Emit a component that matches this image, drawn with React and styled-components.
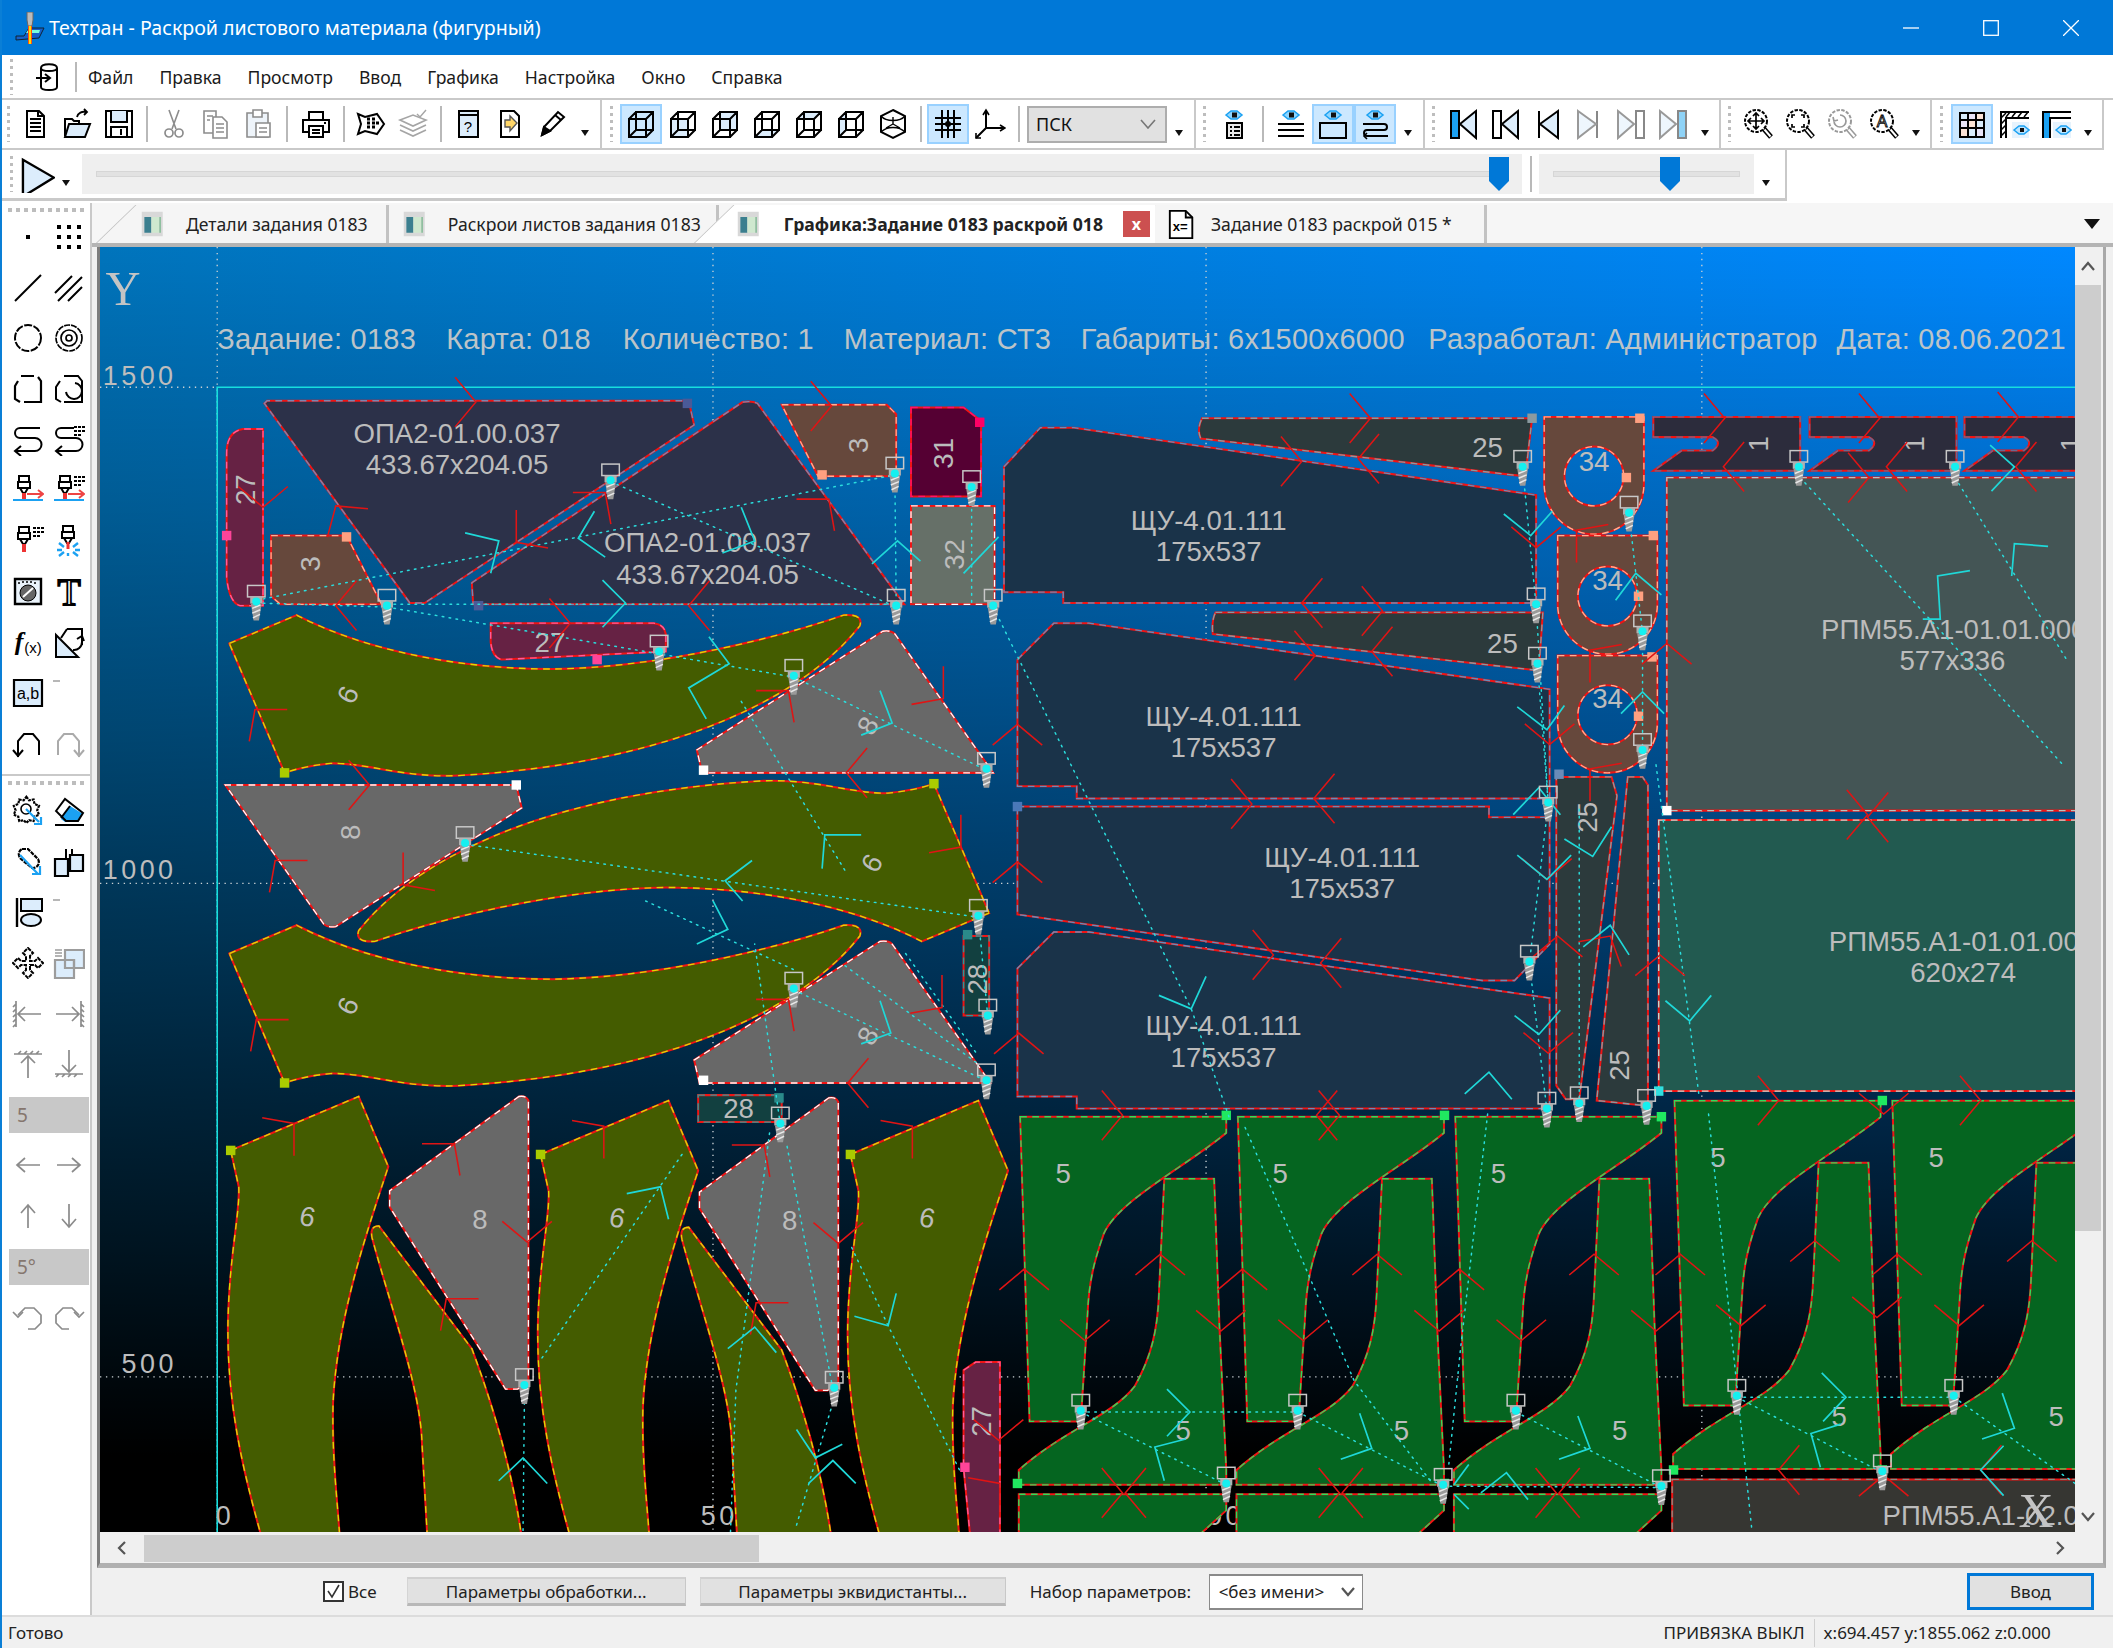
import React from 'react';
import styled, { createGlobalStyle } from 'styled-components';

const FONT = '"Noto Sans", "Open Sans", sans-serif';
const Global = createGlobalStyle`
  html, body { margin: 0; padding: 0; background: #fff; }
  * { box-sizing: border-box; }
`;

const Shell = styled.div`
  width: 2113px; height: 1648px; overflow: hidden; display: flex; flex-direction: column;
  background: #fff; font-family: ${FONT}; color: #111; border-left: 2px solid #0a7fd6;
`;
const TitleBar = styled.div`
  height: 55px; flex: none; background: #0078d7; color: #fff; display: flex; align-items: center;
  padding: 0 2px 0 12px; font-size: 19.6px; margin-left: -2px; padding-left: 14px;
`;
const TitleText = styled.span` margin-left: 3px; flex: 1; `;
const WinBtn = styled.div` width: 80px; height: 55px; display: flex; align-items: center; justify-content: center; `;
const MenuBar = styled.div`
  height: 45px; flex: none; display: flex; align-items: center; border-bottom: 2px solid #c9c9c9; padding-left: 6px; gap: 0;
`;
const MenuIconWrap = styled.div`
  width: 53px; height: 30px; display: flex; align-items: center; justify-content: center; margin-left: 10px; margin-right: 11px;
  border-right: 2px solid #b9b9b9;
`;
const MenuItem = styled.span` font-size: 17.6px; margin-right: 26px; color: #1b1b1b; `;
const ToolRow = styled.div` height: 50px; flex: none; display: flex; `;
const Group = styled.div`
  display: flex; align-items: center; height: 100%; padding-right: 3px;
  border-right: 2px solid #c9c9c9; border-bottom: 2px solid #c9c9c9;
`;
const Grip = styled.div`
  width: ${p => p.$w || 18}px; height: 36px; flex: none; display: flex; justify-content: center;
  &::before { content: ''; width: 3px; height: 100%; background: repeating-linear-gradient(to bottom, #bdbdbd 0 3px, transparent 3px 7px); }
`;
const ToolBtn = styled.div`
  width: 42px; height: 40px; flex: none; display: flex; align-items: center; justify-content: center;
  background: ${p => (p.$active ? '#cce8ff' : 'transparent')};
  box-shadow: ${p => (p.$active ? 'inset 0 0 0 2px #99d1ff' : 'none')};
`;
const Sep = styled.div`
  width: ${p => p.$w || 13}px; height: 36px; flex: none; display: flex; justify-content: center;
  &::before { content: ''; width: 2px; height: 100%; background: #b9b9b9; }
`;
const Drop = styled.div`
  width: ${p => p.$w || 24}px; height: 40px; flex: none; display: flex; align-items: flex-end; justify-content: center; padding-bottom: 8px;
  &::before { content: ''; border: 4.5px solid transparent; border-top: 6px solid #111; border-bottom: 0; }
`;
const Combo = styled.div`
  width: 140px; height: 37px; flex: none; background: #e1e1e1; border: 2px solid #adadad; display: flex; align-items: center;
  justify-content: space-between; padding: 0 9px 0 7px; font-size: 18px;
`;
const SecondRow = styled.div` height: 53px; flex: none; display: flex; `;
const PlayGroup = styled.div`
  width: 1785px; height: 51px; display: flex; align-items: center; border-right: 2px solid #c9c9c9; border-bottom: 3px solid #c9c9c9; padding-left: 6px;
`;
const SliderBox = styled.div`
  position: relative; height: 40px; width: ${p => p.$w}px; flex: none; background: #efefef; display: flex; align-items: center; padding: 0 ${p => p.$pad}px;
`;
const Track = styled.div` flex: 1; height: 6px; background: #e2e2e2; border: 1px solid #d6d6d6; `;
const Thumb = styled.svg` position: absolute; top: 3px; `;
const Main = styled.div` flex: 1; min-height: 0; display: flex; `;
const Dock = styled.div`
  width: 90px; flex: none; background: #fff; border-right: 2px solid #c9c9c9; margin-right: 0; display: flex; flex-direction: column;
`;
const DockSection = styled.div`
  height: ${p => p.$h}px; flex: none; border-bottom: ${p => (p.$end ? 0 : '2px solid #c9c9c9')}; padding: 5px 0 0 5px;
  &::before { content: ''; display: block; height: 4px; margin: 0 3px 0 1px; background: repeating-linear-gradient(to right, #bdbdbd 0 4px, transparent 4px 8px); }
`;
const DockGrid = styled.div`
  display: grid; grid-template-columns: 41px 41px; grid-auto-rows: 50.6px; margin-top: ${p => p.$top}px;
`;
const DockCell = styled.div` display: flex; align-items: center; justify-content: center; `;
const DockInput = styled.div`
  grid-column: 1 / 3; height: 36px; margin: 0 0 0 2px; align-self: center; background: #c8c8c8; color: #85766e; font-size: 19px; padding-left: 8px; line-height: 36px; width: 80px;
`;
const Work = styled.div` flex: 1; min-width: 0; display: flex; flex-direction: column; background: #f0f0f0; `;
const TabStrip = styled.div`
  height: 44px; flex: none; background: #f6f6f6; border-bottom: 4px solid #b4b4b4; display: flex; align-items: flex-end; position: relative; padding-left: 4px;
`;
const Tab = styled.div`
  position: relative; height: 38px; display: flex; align-items: center; margin-left: ${p => p.$ml || 0}px;
  padding: 0 ${p => p.$pr}px 0 ${p => p.$pl}px; z-index: ${p => p.$z}; font-size: 17.6px; font-weight: ${p => (p.$active ? 700 : 400)};
  background: linear-gradient(to right, transparent 40px, ${p => (p.$active ? '#fff' : '#f5f5f5')} 40px);
  border-right: ${p => (p.$active ? '0' : '3px solid #c2c2c2')}; color: #222; white-space: nowrap;
  &::before {
    content: ''; position: absolute; left: 0; top: 0; bottom: 0; width: 42px; background: ${p => (p.$active ? '#fff' : '#f5f5f5')};
    border-left: 1px solid #bdbdbd; transform: skewX(-46deg); transform-origin: bottom left; z-index: -1;
  }
`;
const TabIcon = styled.span` display: flex; margin-right: ${p => p.$mr}px; `;
const CloseTab = styled.span`
  width: 27px; height: 26px; flex: none; background: #cc5050; color: #fff; font-size: 16px; font-weight: 700; display: flex; align-items: center; justify-content: center; margin-left: 20px; line-height: 1;
`;
const TabsMenu = styled.div`
  position: absolute; right: 13px; top: 16px; width: 0; height: 0; border: 8px solid transparent; border-top: 10px solid #111; border-bottom: 0;
`;
const Frame = styled.div`
  flex: 1; min-height: 0; display: flex; flex-direction: column; margin-left: 5px; margin-right: 7px; border-left: 3px solid #7d7d7d; border-right: 3px solid #a8a8a8; border-bottom: 5px solid #b0b0b0;
  background: #f0f0f0; width: 2009px;
`;
const FrameTop = styled.div` flex: 1; min-height: 0; display: flex; `;
const CanvasBox = styled.div`
  width: 1975px; flex: none; height: 100%; overflow: hidden;
  background: linear-gradient(to bottom, rgba(0,0,0,0) 0%, rgba(0,0,0,1) 94%), linear-gradient(to right, #0074bc, #0088ff);
`;
const Sheet = styled.svg` display: block; width: 100%; height: 100%; `;
const VScroll = styled.div` width: 26px; flex: none; background: #f0f0f0; display: flex; flex-direction: column; `;
const ScrollEnd = styled.div` height: ${p => p.$h}px; flex: none; display: flex; align-items: center; justify-content: center; `;
const VThumb = styled.div` height: 946px; flex: none; background: #cdcdcd; `;
const HScroll = styled.div` height: 31px; flex: none; display: flex; align-items: center; background: #f0f0f0; padding-top: 1px; width: 1975px; `;
const HThumb = styled.div` width: 615px; height: 27px; background: #cdcdcd; margin-left: 0; `;
const ArrowCell = styled.div` width: ${p => p.$w}px; flex: none; display: flex; justify-content: center; `;
const Spring = styled.div` flex: 1; `;
const BottomPanel = styled.div`
  height: 47px; flex: none; background: #f0f0f0; display: flex; align-items: center; font-size: 17px; padding-left: 231px; color: #222;
`;
const Check = styled.div`
  width: 21px; height: 21px; border: 2px solid #333; background: #fff; display: flex; align-items: center; justify-content: center; margin-right: 4px;
`;
const PanelBtn = styled.div`
  width: ${p => p.$w}px; height: 29px; background: #e1e1e1; border-top: 2px solid #d0d0d0; border-bottom: 3px solid #b8b8b8; border-left: 1px solid #d4d4d4; border-right: 1px solid #c8c8c8; display: flex; align-items: center; justify-content: center; margin-left: ${p => p.$ml}px;
`;
const PanelLabel = styled.span` margin-left: 24px; width: 179px; white-space: nowrap; `;
const PanelSelect = styled.div`
  width: 154px; height: 36px; background: #fff; border: 2px solid #8a8a8a; border-left-width: 1px; border-right-width: 1px; display: flex; align-items: center; justify-content: space-between; padding: 0 6px 0 9px;
`;
const EnterBtn = styled.div`
  width: 127px; height: 37px; margin-left: auto; margin-right: 19px; background: #e1e1e1; border: 3px solid #0078d7; display: flex; align-items: center; justify-content: center;
`;
const StatusBar = styled.div`
  height: 33px; flex: none; background: #f0f0f0; border-top: 2px solid #dcdcdc; display: flex; align-items: center; font-size: 17px; padding-left: 6px; color: #222;
`;
const StatusCell = styled.span` margin-left: ${p => p.$ml || 0}px; white-space: nowrap; `;
const StatusDiv = styled.span` width: 1px; height: 28px; background: #d0d0d0; margin: 0 9px; `;
const InfoText = styled.text` font: 21.5px "Liberation Sans", Arial, sans-serif; fill: #bcc4c8; letter-spacing: .2px; `;
const AxisText = styled.text` font: 20px "Liberation Sans", Arial, sans-serif; fill: #bdbdbd; letter-spacing: 2.6px; `;
const BigAxis = styled.text` font: 36px "Liberation Serif", serif; fill: #c4c4c4; `;
const PartText = styled.text` font: 20.5px "Liberation Sans", Arial, sans-serif; fill: #bcbcbc; text-anchor: middle; dominant-baseline: central; `;
const IconText = styled.text` font-family: "Liberation Sans", Arial, sans-serif; text-anchor: middle; `;

/* ---------- icons ---------- */
const LB = '#dcedfc';
const SKY = '#1ba1f2';
const P = ({ d, c = '#000', f = 'none', w = 2, ...r }) => <path d={d} stroke={c} fill={f} strokeWidth={w} {...r} />;
const Eye = () => (<g><P d="M8 7l5-4h6l5 4-5 4h-6z" c={SKY} f="#8fd6ff" w={1.5} /><rect x="14" y="4.5" width="5" height="5" fill="#111" /></g>);
const CUBE = face => (<g>
  {face && <path d={face} fill={LB} />}
  <P d="M4 11h17v18H4zM11 4h17v18H11zM4 11l7-7M21 11l7-7M21 29l7-7M4 29l7-7" />
</g>);
const Glass = ({ children, c = '#000' }) => (<g>
  <circle cx="14" cy="13" r="11" fill="#fff" stroke={c} strokeWidth="2" strokeDasharray="3.4 1.4" />
  <P d="M22 21l7 8" c={c} w={5} /><P d="M22.5 21.5l6 7" c="#fff" w={2} />{children}
</g>);
const NavTri = ({ d, c = '#000', f = LB }) => <P d={d} c={c} f={f} />;
const G = '#8c8c8c';
const TORCH = (blue = true) => (<g>
  <P d="M7 2h10v6H7zM6 8h12v6H6zM8 14h8l-3 5h-2z" f="#fff" />
  <P d="M12 19v8" c="#ee3333" w={4} />
  {blue && <P d="M1 26h30" c={SKY} w={2} />}
</g>);
const DOTS = <P d="M21 3h3M25 3h3M29 3h3M21 7h3M25 7h3M29 7h3M21 11h3M25 11h3" w={1.8} />;

const ICONS = {
  base: <g><P d="M7 7c0-5 16-5 16 0v19c0 4-16 4-16 0z" /><P d="M7 7c0 4 16 4 16 0" /><P d="M2 17h13M11 13l5 4-5 4" f="#fff" /></g>,
  doc: <g><P d="M8 3h12l5 5v21H8z" f="#fff" /><P d="M11 11h11M11 15h11M11 19h11M11 23h11M19 3v5h6" /></g>,
  open: <g><P d="M4 28V11h7l2 2h5v3" /><P d="M4 29l4-13h21l-5 13z" f={LB} /><P d="M16 9c1-4 5-6 9-5M23 1l3 3-3 3" w={1.8} /></g>,
  save: <g><P d="M3 3h26v26H3z" f="#fff" /><path d="M8 3h16v11H8z" fill={LB} /><P d="M8 3v11h16V3M8 29V19h16v10M18 21v6" /></g>,
  cut: <g><P d="M11 2l7 19M21 2l-7 19" c={G} w={1.6} /><circle cx="11" cy="25" r="4" fill="none" stroke={G} strokeWidth="1.7" /><circle cx="21" cy="25" r="4" fill="none" stroke={G} strokeWidth="1.7" /></g>,
  copy: <g><P d="M4 3h12v22H4z" c={G} f="#fff" w={1.6} /><P d="M13 9h9l5 5v16H13z" c={G} f="#fff" w={1.6} /><P d="M16 16h8M16 20h8M16 24h8M7 8h6M7 12h3" c={G} w={1.6} /></g>,
  paste: <g><P d="M5 5h21v24H5z" c={G} f="#eef4fa" w={1.6} /><P d="M11 2h9v7h-9z" c={G} f="#fff" w={1.6} /><P d="M14 15h14v14H14z" c={G} f="#fff" w={1.6} /><P d="M17 20h8M17 24h8" c={G} w={1.6} /></g>,
  print: <g><P d="M9 4h14v8H9z" f="#fff" /><P d="M9 24H3V12h26v12h-6" f="#fff" /><P d="M9 18h14v11H9zM12 22h8M12 25h8" f="#fff" /><P d="M24 15h2" /></g>,
  nest: <g><P d="M3 6l7 3 12-3 7 10-7 10-12-3-7 3 3-10z" f="#fff" /><P d="M12 11h3M17 11h3M12 15h3M17 15h3M21 15h3M12 19h3M17 19h3" w={3} /></g>,
  layers: <g><P d="M3 12l13-5 13 5-13 6zM3 17l13 6 13-6M3 22l13 6 13-6" c="#a5a5a5" w={1.6} /><P d="M20 6l3 3 6-7" c="#a5a5a5" w={1.4} /></g>,
  help: <g><P d="M7 3h19v26H7z" f={LB} /><P d="M7 7h19" /><IconText x="16" y="24" fontSize="15" fill="#000">?</IconText></g>,
  docArrow: <g><P d="M7 3h13l5 5v21H7z" f="#fff" /><P d="M11 12h5V8l7 7-7 8v-4h-5z" c="#555" f="#ffd668" w={1.4} /></g>,
  pencil: <g><P d="M6 27l2-8L22 4l6 5-14 14z" f="#fff" /><P d="M6 27l8-4-6-4z" f="#000" /><P d="M19 7l6 5" /></g>,
  c0: CUBE(), c1: CUBE('M4 11h17v18H4z'), c2: CUBE('M11 4h17v18H11z'), c3: CUBE('M4 29l7-7h17l-7 7z'), c4: CUBE('M4 11l7-7h17l-7 7z'), c5: CUBE('M4 11l7-7v18l-7 7z'), c6: CUBE('M21 11l7-7v18l-7 7z'),
  iso: <g><P d="M16 2l12 6v16l-12 6-12-6V8z" /><P d="M16 16V9M16 16l-7 4M16 16l7 4M4 8c5 6 19 6 24 0M4 24c6-6 18-6 24 0" w={1.4} /></g>,
  grid: <g><P d="M10 2v28M16 2v28M22 2v28M3 10h26M3 16h26M3 22h26" /><circle cx="16" cy="16" r="3" fill="#000" /></g>,
  axes: <g><P d="M12 20V3M12 20h18M12 20L2 30" /><P d="M9 7l3-5 3 5M26 17l5 3-5 3M2 25v5h5" w={1.6} /></g>,
  eyeDoc: <g><Eye /><P d="M9 15h15v15H9z" f="#e9e9e9" /><P d="M12 19h2M16 19h6M12 23h2M16 23h6M12 27h2M16 27h6" /></g>,
  eyeLines: <g><Eye /><P d="M3 16h26M3 22h26M3 28h26" /></g>,
  eyeRect: <g><Eye /><P d="M3 15h26v15H3z" /></g>,
  eyeLoop: <g><Eye /><P d="M4 16h21a3 3 0 010 6H8a3 3 0 000 6h21" /><P d="M8 25l-3 3 3 3" w={1.6} /></g>,
  n1: <g><P d="M4 3h8v27H4z" f={SKY} /><NavTri d="M29 3L13 16l16 14z" /></g>,
  n2: <g><P d="M4 3h8v27H4z" f="#fff" /><NavTri d="M29 3L13 16l16 14z" /></g>,
  n3: <g><P d="M8 3v27" /><NavTri d="M27 3L9 16l18 14z" /></g>,
  n4: <g><P d="M24 3v27" c="#888" /><NavTri d="M5 3l18 13L5 30z" c="#999" f="#eef6fd" /></g>,
  n5: <g><P d="M21 3h8v27h-8z" c="#888" f="#fff" /><NavTri d="M3 3l16 13L3 30z" c="#999" f="#eef6fd" /></g>,
  n6: <g><P d="M21 3h8v27h-8z" c="#888" f="#8fd3f7" /><NavTri d="M3 3l16 13L3 30z" c="#999" f="#eef6fd" /></g>,
  z1: <Glass><P d="M14 5v16M6 13h16M11 8l3-3 3 3M11 18l3 3 3-3M9 10l-3 3 3 3M19 10l3 3-3 3" w={1.7} /></Glass>,
  z2: <Glass><P d="M8 10V7h3M17 7h3v3M20 16v3h-3M11 19H8v-3" w={1.7} /></Glass>,
  z3: <Glass c="#999"><P d="M8 13a6 6 0 106-6M7 9l1 4 4-1" c="#999" w={1.7} /></Glass>,
  z4: <Glass><IconText x="14" y="19" fontSize="16" fill="none" stroke="#000" strokeWidth=".9">A</IconText></Glass>,
  table: <g><path d="M4 5h8v7H4z" fill="#d9ecfb" /><path d="M12 5h8v7h-8z" fill="#e8e3f6" /><path d="M20 5h8v7h-8z" fill="#fbe3d6" /><path d="M4 12h8v8H4z" fill="#e8e3f6" /><path d="M12 12h8v8h-8z" fill="#fbe3d6" /><path d="M20 12h8v8h-8z" fill="#d9ecfb" /><path d="M4 20h8v8H4z" fill="#fbe3d6" /><path d="M12 20h8v8h-8z" fill="#d9ecfb" /><path d="M20 20h8v8h-8z" fill="#e8e3f6" /><P d="M4 5h24v24H4zM12 5v24M20 5v24M4 12h24M4 20h24" /></g>,
  corner1: <g><P d="M3 30V4h28M8 30V10h23" /><P d="M3 10l5-5M3 16l5-5M3 22l5-5M3 28l5-5M12 4l-4 5M18 4l-4 5M24 4l-4 5M30 4l-4 5" w={1.5} /><path d="M14 14h17v16H14z" fill="#e6f3fd" /><P d="M16 22l5-4h5l5 4-5 4h-5z" c={SKY} f="#bde6ff" w={1.5} /><rect x="22" y="20" width="4" height="4" fill="#111" /></g>,
  corner2: <g><path d="M3 4h7v26H3z" fill={SKY} /><P d="M3 30V4h28M10 30V10h21" /><path d="M13 14h18v16H13z" fill="#e6f3fd" /><P d="M16 22l5-4h5l5 4-5 4h-5z" c={SKY} f="#bde6ff" w={1.5} /><rect x="22" y="20" width="4" height="4" fill="#111" /></g>,
  play: <P d="M5 4l26 15L5 35z" f={LB} />,
  point: <rect x="14" y="14" width="4" height="4" fill="#000" />,
  points: <g>{[6, 16, 26].flatMap(y => [6, 16, 26].map(x => <rect key={x + '-' + y} x={x - 2} y={y - 2} width="4" height="4" fill="#000" />))}</g>,
  line: <P d="M3 29L29 3" />,
  lines: <P d="M2 21L19 4M5 29L29 5M15 29L29 15" />,
  circle: <circle cx="16" cy="16" r="13" fill="none" stroke="#000" strokeWidth="2" strokeDasharray="8 1.5" />,
  rings: <g><circle cx="16" cy="16" r="13" fill="none" stroke="#000" strokeWidth="1.7" strokeDasharray="6 1" /><circle cx="16" cy="16" r="8" fill="none" stroke="#000" strokeWidth="1.7" /><circle cx="16" cy="16" r="3" fill="none" stroke="#000" strokeWidth="1.7" /></g>,
  round: <P d="M9 3h13M26 4l3 4v21H12M8 29l-5-3V13l3-5" w={2.2} />,
  rectc: <g><P d="M11 3h14l4 5v21H11M8 29l-5-3V14l4-6" /><P d="M13 19a8 8 0 109-9" /></g>,
  snake: <g><P d="M28 4H8a5 5 0 000 10h15a6 6 0 010 13H4" /><P d="M9 22l-6 5 6 5" /></g>,
  snakeD: <g><P d="M21 4H8a5 5 0 000 10h15a6 6 0 010 13H4" /><P d="M9 22l-6 5 6 5" />{DOTS}</g>,
  torchL: <g>{TORCH()}<P d="M15 20h15M26 16l5 4-5 4" c="#ee4444" /></g>,
  torchD: <g>{TORCH()}<P d="M15 20h15M26 16l5 4-5 4" c="#ee4444" />{DOTS}</g>,
  torchS: <g>{TORCH(false)}{DOTS}</g>,
  burst: <g><P d="M10 1h10v6H10zM9 7h12v6H9zM11 13h8l-3 5h-2z" f="#fff" /><P d="M15 17v7" c="#ee3333" w={3} /><P d="M6 18l5 4M25 18l-5 4M6 31l5-4M25 31l-5-4M4 25h5M22 25h5M15 28v3" c={SKY} w={2.4} /></g>,
  gauge: <g><P d="M3 4h26v25H3z" f="#eaf3fb" w={2.4} /><P d="M6 8h2M10 7h2M14 7h2M18 7h2M22 8h2" w={1.4} /><circle cx="16" cy="18" r="8" fill="#666" stroke="#000" /><P d="M11 22l10-9" c="#fff" w={2} /></g>,
  T: <IconText x="16" y="30" fontSize="38" fontFamily="Liberation Serif" fill="#fff" stroke="#000" strokeWidth="1.8" style={{ fontFamily: '"Liberation Serif", serif' }}>T</IconText>,
  fx: <g><IconText x="7" y="24" fontSize="26" fontWeight="700" fill="#000" style={{ fontFamily: '"Liberation Serif", serif', fontStyle: 'italic' }}>f</IconText><IconText x="21" y="27" fontSize="15" fill="#000">(x)</IconText></g>,
  tri: <g><P d="M3 9v22h22z" f={LB} /><P d="M14 3h15v16" /><P d="M14 3L8 12M29 16a8 8 0 01-9 8" /><P d="M24 13l5-3 2 5" /></g>,
  ab: <g><P d="M2 3h28v26H2z" f={LB} w={2.2} /><IconText x="16" y="22" fontSize="16" fill="#000">a,b</IconText></g>,
  dash: <P d="M0 4h7" c="#888" w={1.2} />,
  undo: <g><P d="M6 30V14l6-7h9l6 7v14" /><P d="M1 23l5 6 5-6" /></g>,
  redo: <g><P d="M5 28V14l6-7h9l6 7v16" c="#aaa" /><P d="M21 23l5 6 5-6" c="#aaa" /></g>,
  gear: <g><P d="M16 2l3 4 5-1 1 5 5 2-2 5 2 5-5 2-1 5-5-1-3 3-3-3-5 1-1-5-5-2 2-5-2-5 5-2 1-5 5 1z" f="#fff" w={2.4} strokeDasharray="3 1" transform="scale(.9)" /><circle cx="14" cy="14" r="5" fill="#fff" stroke="#000" strokeWidth="1.6" /><P d="M14 14l13 13M22 29h7v-7" c={SKY} w={2.2} /></g>,
  eraser: <g><path d="M17 11l13 8-5 8H12l-4-3z" fill={SKY} /><P d="M3 16L12 4l18 14-5 8H13zM17 11l-9 12M2 30h29" /></g>,
  link: <g><P d="M10 3h6l10 10a6 6 0 01-6 9L9 13a6 6 0 011-10z" f="#fff" w={2.2} strokeDasharray="4 1" /><P d="M8 9l18 19M20 28h8v-8" c={SKY} w={2.2} /></g>,
  dist: <g><P d="M2 13h13v17H2zM17 9h13v16H17z" f={LB} w={2.2} /><P d="M13 3v11M19 3v7" /></g>,
  align: <g><P d="M5 2v29" w={2.4} /><P d="M9 3h21v12H9z" f={LB} /><ellipse cx="19" cy="24" rx="10" ry="6" fill={LB} stroke="#000" strokeWidth="2" /></g>,
  move: <P d="M16 1l5 5-3 3v5h5l3-3 5 5-5 5-3-3h-5v5l3 3-5 5-5-5 3-3v-5H9l-3 3-5-5 5-5 3 3h5V9l-3-3z" f="#fff" w={2} strokeDasharray="4 1" />,
  overlay: <g><P d="M12 3h19v18H12z" c="#9c9c9c" f={LB} w={2.2} /><P d="M2 13h19v18H2z" c="#9c9c9c" f={LB} w={2.2} /><P d="M12 13h9v8h-9z" c="#9c9c9c" w={2.2} /><P d="M2 3h7M2 6h7M2 9h7" c="#9c9c9c" w={1.3} /></g>,
  alL: <g><P d="M4 3v26M4 6l-3 3M4 11l-3 3M4 16l-3 3M4 21l-3 3M4 26l-3 3M29 16H6M13 9l-7 7 7 7" c="#8b8b8b" w={1.7} /></g>,
  alR: <g><P d="M28 3v26M28 6l3 3M28 11l3 3M28 16l3 3M28 21l3 3M28 26l3 3M3 16h23M19 9l7 7-7 7" c="#8b8b8b" w={1.7} /></g>,
  alT: <g><P d="M2 6h28M6 6l3-3M12 6l3-3M18 6l3-3M24 6l3-3M16 30V8M9 15l7-7 7 7" c="#8b8b8b" w={1.7} /></g>,
  alB: <g><P d="M2 26h28M6 26l-3 3M12 26l-3 3M18 26l-3 3M24 26l-3 3M16 2v22M9 17l7 7 7-7" c="#8b8b8b" w={1.7} /></g>,
  aL: <P d="M28 16H5M13 9l-8 7 8 7" c="#8b8b8b" w={1.7} />,
  aR: <P d="M4 16h23M19 9l8 7-8 7" c="#8b8b8b" w={1.7} />,
  aU: <P d="M16 28V5M9 13l7-8 7 8" c="#8b8b8b" w={1.7} />,
  aD: <P d="M16 4v23M9 19l7 8 7-8" c="#8b8b8b" w={1.7} />,
  rotL: <g><P d="M6 14l7-7h9l7 7v8l-6 6h-7" c="#8b8b8b" w={1.7} /><P d="M1 11l5 5 5-5" c="#8b8b8b" w={1.7} /></g>,
  rotR: <g><P d="M26 14l-7-7h-9l-7 7v8l6 6h7" c="#8b8b8b" w={1.7} /><P d="M21 11l5 5 5-5" c="#8b8b8b" w={1.7} /></g>,
  tabGrid: <g><path d="M2 2h24v28H2z" fill="#d8d8d8" /><path d="M5 8h8v18H5z" fill="#3b7f8f" /><path d="M13 8h9v18h-9z" fill="#cfe8cf" /><path d="M22 8h2v18h-2z" fill="#8fbf9f" /></g>,
  xls: <g><P d="M3 2h17l7 7v22H3z" f="#fff" /><P d="M20 2v7h7" /><IconText x="14" y="23" fontSize="14" fontWeight="700" fill="#000">x=</IconText></g>,
  logo: <g><P d="M13 0h6v8l-1 6h-4l-1-6z" c="#666" f="#bbb" w={1} /><path d="M2 24h8l5-8h15l-5 10-23 2z" fill="#1560c8" stroke="#123" /><path d="M12 21h13l1-3H14z" fill="#7fd" /><path d="M14 14h4v18h-4z" fill="#ff5010" /><path d="M15 14h2v18h-2z" fill="#ffdd00" /></g>,
};
const Ico = ({ n, s = 32, h }) => <svg width={s} height={h || s} viewBox={h ? `0 0 32 ${h * 32 / s}` : '0 0 32 32'}>{ICONS[n]}</svg>;

const ROW1 = [
  { w: 0, items: [['grip', 12], ['g', 'doc'], ['g', 'open'], ['g', 'save'], ['s', 13], ['g', 'cut'], ['g', 'copy'], ['g', 'paste'], ['s', 16], ['g', 'print'], ['s', 13], ['g', 'nest'], ['g', 'layers'], ['s', 13], ['g', 'help'], ['g', 'docArrow'], ['g', 'pencil'], ['d', 24]] },
  { items: [['grip', 18], ['a', 'c0'], ['g', 'c1'], ['g', 'c2'], ['g', 'c3'], ['g', 'c4'], ['g', 'c5'], ['g', 'iso'], ['s', 13], ['a', 'grid'], ['g', 'axes'], ['s', 16], ['combo'], ['d', 24]] },
  { items: [['grip', 17], ['g', 'eyeDoc'], ['s', 15], ['g', 'eyeLines'], ['a', 'eyeRect'], ['a', 'eyeLoop'], ['d', 24]] },
  { items: [['grip', 17], ['g', 'n1'], ['g', 'n2'], ['g', 'n3'], ['g', 'n4'], ['g', 'n5'], ['g', 'n6'], ['d', 22]] },
  { items: [['grip', 16], ['g', 'z1'], ['g', 'z2'], ['g', 'z3'], ['g', 'z4'], ['d', 22]] },
  { items: [['grip', 19], ['a', 'table'], ['g', 'corner1'], ['g', 'corner2'], ['d', 22]] },
];
const DOCK1 = ['point', 'points', 'line', 'lines', 'circle', 'rings', 'round', 'rectc', 'snake', 'snakeD', 'torchL', 'torchD', 'torchS', 'burst', 'gauge', 'T', 'fx', 'tri', 'ab', 'dash', 'undo', 'redo'];
const DOCK2A = ['gear', 'eraser', 'link', 'dist', 'align', 'dash', 'move', 'overlay', 'alL', 'alR', 'alT', 'alB'];
const DOCK2B = ['aL', 'aR', 'aU', 'aD'];

const renderTool = (t, i) => {
  const [k, v] = t;
  if (k === 'grip') return <Grip key={i} $w={v} />;
  if (k === 's') return <Sep key={i} $w={v} />;
  if (k === 'd') return <Drop key={i} $w={v} />;
  if (k === 'combo') return <Combo key={i}>ПСК<svg width="16" height="10" viewBox="0 0 16 10"><path d="M1 1l7 8 7-8" fill="none" stroke="#777" strokeWidth="1.6" /></svg></Combo>;
  return <ToolBtn key={i} $active={k === 'a'}><Ico n={v} /></ToolBtn>;
};

/* ---------- nesting sheet (display coordinates) ---------- */
const OLIVE = '#445c00', GREY = '#686868', WINE = '#662244', BROWN = '#66483c', NAVY = '#2c3149', SLATE = '#1a3349', GRN = '#056520', DK25 = '#2c3a3c';
const BLADE = 'M170,477 L220,456 C270,482 340,496 410,496 C490,495 580,472 626,456 Q641,455 638,464 C600,512 510,565 340,575 C300,577 270,565 245,566 Q225,568 211,573 Z';
const TRI = 'M655,468 Q661,467 664,470 L737,573 H521 L517,556 Z';
const VBLADE = 'M171,853 L266,813 L288,865 C275,905 250,975 247,1040 C246,1080 250,1110 252,1140 H194 C180,1090 168,1040 169,980 C170,930 178,900 177,880 Z';
const VTRI = 'M385,813 Q390,812 392,816 V1025 L384,1030 H375 L289,895 V883 Z';
const NARROW = 'M281,909 Q274,909 276,918 C290,970 312,1030 313,1070 L317,1140 H387 C380,1090 365,1040 350,1000 Z';
const FIVE_A = 'M757,828 H910 V840 C880,865 830,890 819,915 C812,935 808,950 807,975 L802,1054 H764 Z';
const FIVE_B = 'M864,874 H901 L905,985 L910,1090 V1101 H756 V1090 C790,1060 825,1050 842,1028 C855,1005 859,985 860,960 Z';
const FIVE_C = 'M756,1108 H910 V1120 L888,1140 H756 Z';
const ring = (cx, cy, top) => `M${cx - 37},${top} H${cx + 37} V${cy + 6} A37,37 0 0 1 ${cx - 37},${cy + 6} Z M${cx + 22},${cy} A22,22 0 1 0 ${cx - 22},${cy} A22,22 0 1 0 ${cx + 22},${cy} Z`;
const ONE = 'M1227,309 H1336 V349 H1227 L1248,334 H1271 Q1279,328 1271,324 H1227 Z';
const PARTS = [
  ['M196,299 L198,297 H511 L515,315 L315,447 H304 Z', NAVY, '#7a86b0'],
  ['M551,298 Q558,297 562,299 L671,448 H351 L350,432 Z', NAVY, '#7a86b0'],
  ['M195,318 H180 Q168,320 168,336 V428 Q170,447 178,449 H195 Z', WINE, '#ff5c9c'],
  ['M201,397 H257 L283,448 H208 L201,442 Z', BROWN, '#ffb090'],
  ['M580,300 H658 L665,307 V353 H607 Z', BROWN, '#ffb090'],
  ['M676,302 H715 L728,312 V368 H676 Z', '#550033', '#ff1070'],
  ['M676,375 H738 V448 H676 Z', '#667068', '#ffffff'],
  ['M364,462 H485 Q493,463 494,470 V483 L372,489 Q365,487 364,476 Z', WINE, '#ff5c9c'],
  ['M715,694 H734 V753 H715 Z', '#124040', '#2a9a9a'],
  ['M518,812 H580 V832 H518 Z', '#124040', '#2a9a9a'],
  ['M715,1016 L724,1010 H742 V1140 H720 L715,1088 Z', WINE, '#ff5c9c'],
  ['M745,346 L772,317 H797 L1140,367 V447 H789 V439 H745 Z', SLATE, '#6a8cb8'],
  ['M755,489 L782,462 H808 L1150,511 V592 H799 V583 H755 Z', SLATE, '#6a8cb8'],
  ['M755,598 H1105 V606 H1150 V700 L1124,727 H1100 L755,678 Z', SLATE, '#6a8cb8'],
  ['M755,718 L782,691 H808 L1150,740 V822 H799 V813 H755 Z', SLATE, '#6a8cb8'],
  ['M892,310 H1137 L1132,353 L1122,352 L891,325 Q888,318 892,310 Z', DK25, '#8a9aa0'],
  ['M902,454 H1145 L1142,497 L1132,496 L900,470 Q899,460 902,454 Z', DK25, '#8a9aa0'],
  ['M1155,576 H1196 L1200,590 L1172,815 L1162,815 L1155,805 Z', DK25, '#8a9aa0'],
  ['M1208,576 H1219 L1223,582 V820 L1185,816 Z', DK25, '#8a9aa0'],
  [ring(1183, 353, 309), BROWN, '#ffb090'],
  [ring(1193, 442, 397), BROWN, '#ffb090'],
  [ring(1193, 530, 486), BROWN, '#ffb090'],
  [ONE, '#2c2c3c', '#6a6a90'],
  [ONE, '#2c2c3c', '#6a6a90', 'translate(116,0)'],
  [ONE, '#2c2c3c', '#6a6a90', 'translate(231,0)'],
  ['M1237,354 H1545 V601 H1237 Z', '#445555', '#b8c4c0'],
  ['M1231,608 H1545 V809 H1231 Z', '#225a50', '#c0e0d8'],
  ['M1241,1097 H1545 V1140 H1241 Z', '#363632', '#8a8a80'],
  [BLADE, OLIVE, '#d8e000'],
  [BLADE, OLIVE, '#d8e000', 'translate(0,230)'],
  [BLADE, OLIVE, '#d8e000', 'translate(904,1154) rotate(180)'],
  [TRI, GREY, '#ffffff'],
  [TRI, GREY, '#ffffff', 'translate(-2,230)'],
  [TRI, GREY, '#ffffff', 'translate(904,1155) rotate(180)'],
  [VBLADE, OLIVE, '#d8e000'],
  [VBLADE, OLIVE, '#d8e000', 'translate(230,3)'],
  [VBLADE, OLIVE, '#d8e000', 'translate(460,3)'],
  [VTRI, GREY, '#ffffff'],
  [VTRI, GREY, '#ffffff', 'translate(230,1)'],
  [NARROW, OLIVE, '#d8e000'],
  [NARROW, OLIVE, '#d8e000', 'translate(230,1)'],
  ...[[0, 0], [161.6, 0], [323, 0], [485.7, -11.8], [647.4, -11.8]].flatMap(([x, y]) => [
    [FIVE_A, GRN, '#2ce05a', `translate(${x},${y})`],
    [FIVE_B, GRN, '#2ce05a', `translate(${x},${y})`],
  ]),
  [FIVE_C, GRN, '#2ce05a'],
  [FIVE_C, GRN, '#2ce05a', 'translate(161.6,0)'],
  [FIVE_C, GRN, '#2ce05a', 'translate(323,0)'],
];
const TORCHES = [[190, 447], [287, 450], [453, 357], [489, 484], [589, 502], [664, 352], [665, 450], [721, 362], [737, 450], [345, 626], [732, 571], [726, 680], [589, 734], [733, 754], [732, 802], [579, 834], [389, 1028], [619, 1030], [802, 1047], [963, 1047], [1125, 1047], [1289, 1036], [1450, 1036], [1397, 1092], [910, 1101], [1071, 1102], [1233, 1103], [1148, 823], [1172, 819], [1222, 821], [1130, 347], [1140, 449], [1141, 493], [1149, 596], [1135, 714], [1209, 381], [1219, 469], [1219, 557], [1335, 347], [1451, 347]];
const REDS = [[353, 298, 180], [617, 301, 180], [195, 376, 270], [249, 375, 55], [383, 402, -40], [449, 365, 130], [615, 370, 130], [249, 449, 0], [511, 449, 0], [423, 462, 180], [189, 526, 50], [585, 512, 130], [700, 518, 220], [628, 573, 0], [274, 582, 180], [204, 638, 50], [299, 656, -40], [713, 628, 220], [190, 756, 50], [585, 741, 130], [699, 747, 220], [629, 803, 0], [218, 833, 140], [337, 848, 130], [448, 835, 140], [567, 849, 130], [677, 835, 140], [391, 921, 270], [622, 922, 270], [331, 963, 50], [561, 966, 50], [756, 766, 90], [760, 941, 90], [741, 1068, 270],
  [1017, 310, 180], [966, 342, 180], [1008, 340, 0], [1280, 310, 180], [1395, 310, 180], [1498, 309, 180], [1279, 346, 0], [1387, 354, 180], [1400, 346, 0], [1496, 346, 0], [966, 447, 0], [1026, 453, 180], [976, 486, 180], [1018, 483, 0], [1140, 406, 270], [755, 537, 90], [755, 639, 90], [1150, 552, 270], [929, 596, 180], [975, 592, 0], [945, 708, 180], [980, 714, 0], [1148, 652, 270], [1156, 694, 90], [1232, 708, 90], [1149, 781, 270], [1237, 477, 90], [1386, 604, 180], [1386, 606, 0], [1170, 393, 40], [1180, 482, 40], [1180, 570, 40], [1195, 694, 120],
  [833, 827, 180], [994, 827, 180], [977, 827, 0], [922, 941, 90], [1083, 941, 90], [861, 930, 90], [1022, 930, 90], [1183, 930, 90], [1247, 930, 90], [1347, 920, 90], [1408, 930, 90], [1508, 920, 90], [805, 994, 270], [967, 994, 270], [1129, 994, 270], [906, 987, 270], [1068, 987, 270], [1229, 987, 270], [1292, 983, 270], [1454, 983, 270], [1393, 977, 270], [833, 1107, 180], [835, 1107, 0], [994, 1107, 180], [996, 1107, 0], [1155, 1107, 180], [1157, 1107, 0], [1320, 1090, 0], [1398, 1094, 90], [1470, 1090, 0], [1320, 816, 180], [1470, 816, 180], [1398, 826, 270], [742, 1100, 140]];
const CYANS = ['345,395 370,401 364,425', '441,379 429,399 449,413', '550,376 560,401 536,410', '647,418 666,401 683,416', '715,425 741,398', '447,430 464,447 447,465', '526,472 541,492 511,510 524,533', '653,512 662,536 639,545', '639,619 612,619 610,644', '558,638 538,653 551,668', '517,700 540,689 529,668', '653,742 661,766 639,774', '465,885 490,880 496,904', '634,976 659,983 665,959', '370,1098 388,1081 406,1100', '540,1000 560,984 576,1003', '591,1060 605,1081 625,1071', '600,1100 618,1083 635,1100', '1116,381 1136,397 1152,379', '1199,445 1214,425 1233,441', '1203,529 1219,513 1235,529', '1126,524 1148,541 1161,523', '1123,604 1142,584 1158,604', '1161,622 1182,635 1196,613', '1126,634 1148,652 1166,634', '1175,702 1195,686 1209,708', '1124,753 1142,767 1158,749', '860,738 884,748 895,724', '1236,742 1254,757 1270,738', '1087,811 1105,795 1122,815', '1477,330 1495,346 1478,364', '1493,427 1495,403 1520,405', '1427,459 1440,459 1438,427 1462,423', '866,1030 883,1047 866,1065', '864,1098 857,1073 880,1067', '1009,1048 1018,1074 995,1082', '1171,1050 1180,1074 1157,1082', '1099,1107 1118,1092 1134,1112', '1352,1018 1370,1036 1353,1054', '1351,1088 1344,1063 1366,1056', '1486,1033 1495,1059 1471,1067', '1487,1109 1470,1090 1487,1072', '1079,1101 1090,1086', '1079,1108 1090,1119'];
const DOTTED = ['190,445 664,352', '190,447 287,450', '287,448 665,448', '287,450 589,502', '453,357 665,450', '664,352 665,448', '721,362 721,449', '589,502 732,571', '345,626 726,680', '550,520 628,647', '737,450 884,748 912,828', '1130,347 1140,449', '1140,449 1149,596', '1141,493 1149,596', '1149,596 1135,714', '1135,714 1148,823', '1209,381 1219,469 1219,557', '1229,567 1261,813', '1172,600 1172,819', '1336,354 1532,568', '1451,354 1535,491', '924,836 1005,1024 1063,1100', '1104,826 1084,999 1075,1088', '1268,826 1300,1133', '802,1047 963,1047', '1289,1036 1450,1036', '963,1047 1071,1102', '802,1047 910,1101', '1125,1047 1233,1103', '1071,1102 1233,1103', '1289,1036 1397,1092', '1450,1036 1540,1100', '506,856 402,1007', '571,840 546,1031 542,1136', '584,850 618,1030', '389,1040 388,1136', '618,1040 591,1131', '632,925 659,983 713,1092', '627,716 726,789', '479,668 589,719', '589,734 733,802', '672,707 726,783', '726,680 733,754', '579,834 560,700'];
const MARKS = [[510, 299, '#4a5a98'], [355, 449, '#4a5a98'], [168, 397, '#ff4499'], [443, 489, '#ff4499'], [257, 398, '#ffa080'], [610, 352, '#ffa080'], [727, 313, '#ff0066'], [383, 582, '#fff'], [522, 571, '#fff'], [522, 801, '#fff'], [211, 573, '#aacc00'], [211, 803, '#aacc00'], [693, 581, '#aacc00'], [171, 853, '#aacc00'], [401, 856, '#aacc00'], [631, 856, '#aacc00'], [718, 693, '#2a8a8a'], [578, 814, '#2a8a8a'], [1137, 310, '#8a9aa0'], [1207, 354, '#ffa080'], [1216, 442, '#ffa080'], [1216, 531, '#ffa080'], [1217, 310, '#ffa080'], [1227, 397, '#ffa080'], [1226, 487, '#ffa080'], [1237, 601, '#fff'], [1157, 574, '#6a8cb8'], [755, 598, '#4a78b8'], [910, 827, '#20e860'], [1072, 827, '#20e860'], [1233, 828, '#20e860'], [1397, 816, '#20e860'], [755, 1100, '#20e860'], [910, 1100, '#20e860'], [1072, 1100, '#20e860'], [1242, 1090, '#20e860'], [1397, 1090, '#20e860'], [716, 1088, '#ff4499'], [1231, 809, '#30e0e0']];
const LABELS = [['ОПА2-01.00.037', 339, 321], ['433.67x204.05', 339, 344], ['ОПА2-01.00.037', 525, 402], ['433.67x204.05', 525, 426], ['27', 182, 363, -90], ['3', 230, 418, -90], ['3', 637, 330, -90], ['31', 700, 336, -90], ['32', 708, 411, -90], ['27', 408, 476], ['6', 258, 515, -65], ['8', 644, 538, -60], ['8', 260, 617, -90], ['6', 647, 640, -60], ['6', 258, 746, -65], ['8', 644, 768, -60], ['28', 725, 726, -90], ['28', 548, 822], ['6', 228, 902, 12], ['8', 356, 904], ['6', 458, 903, 12], ['8', 586, 905], ['6', 688, 903, 12], ['27', 728, 1054, -90], ['25', 1104, 332], ['25', 1115, 477], ['34', 1183, 342], ['34', 1193, 430], ['34', 1193, 518], ['1', 1305, 329, -90], ['1', 1421, 329, -90], ['1', 1537, 329, -90], ['ЩУ-4.01.111', 897, 386], ['175x537', 897, 409], ['ЩУ-4.01.111', 908, 531], ['175x537', 908, 554], ['ЩУ-4.01.111', 996, 636], ['175x537', 996, 659], ['ЩУ-4.01.111', 908, 760], ['175x537', 908, 784], ['25', 1178, 606, -90], ['25', 1202, 790, -90], ['РПМ55.А1-01.01.000', 1450, 467], ['577x336', 1449, 490], ['РПМ55.А1-01.01.00', 1450, 698], ['620x274', 1457, 721], ['5', 789, 870], ['5', 950, 870], ['5', 1112, 870], ['5', 1275, 858], ['5', 1437, 858], ['5', 878, 1061], ['5', 1040, 1061], ['5', 1202, 1061], ['5', 1365, 1050], ['5', 1526, 1050], ['РПМ55.А1-02.0', 1470, 1124]];
const INFO = [['Задание: 0183', 161], ['Карта: 018', 331], ['Количество: 1', 462], ['Материал: СТ3', 626], ['Габариты: 6x1500x6000', 802], ['Разработал: Администратор', 1060], ['Дата: 08.06.2021', 1363]];
const AXES = [['1500', 76, 285], ['1000', 76, 652], ['500', 90, 1018], ['0', 160, 1131], ['500', 520, 1131], ['1000', 882, 1131], ['1500', 1249, 1131]];

const chevron = (x, y, dir, len = 24, spread = 50) => {
  const a = (dir - spread) * Math.PI / 180, b = (dir + spread) * Math.PI / 180;
  return `${(x + len * Math.cos(a)).toFixed(1)},${(y + len * Math.sin(a)).toFixed(1)} ${x},${y} ${(x + len * Math.cos(b)).toFixed(1)},${(y + len * Math.sin(b)).toFixed(1)}`;
};
const Torch = ({ x, y }) => (
  <g transform={`translate(${x},${y})`}>
    <rect x="-6.5" y="-13" width="13" height="8.5" fill="none" stroke="#c8c8c8" strokeWidth="1.1" />
    <rect x="-4.5" y="-4.5" width="9" height="5" fill="#b0b0b0" />
    <path d="M-4,.5 H4 L2,13 H-2 Z" fill="#9a9a9a" />
    <path d="M-3,4 L3,1.5 M-3,7.5 L3,5 M-2.5,11 L2.8,8.5" stroke="#e8e8e8" strokeWidth="1.1" />
    <circle cx="0" cy="-1" r="3" fill="#15f0f0" />
  </g>
);

const Sheet2D = () => (
  <Sheet viewBox="74 183 1466 953" preserveAspectRatio="none">
    <g stroke="#c8d0d4" strokeWidth="1" strokeDasharray="1 3.4" fill="none">
      {[529, 895, 1263].map(x => <line key={x} x1={x} x2={x} y1={183} y2={1136} />)}
      <line x1="161" x2="161" y1="183" y2="1136" />
      {[655, 1021].map(y => <line key={y} x1={74} x2={1540} y1={y} y2={y} />)}
      <line x1="74" x2="161" y1="287" y2="287" />
    </g>
    <path d="M161,1136 V287 H1540" fill="none" stroke="#17dede" strokeWidth="1.2" />
    {INFO.map(([t, x]) => <InfoText key={t} x={x} y={259}>{t}</InfoText>)}
    {AXES.map(([t, x, y]) => <AxisText key={t + x} x={x} y={y}>{t}</AxisText>)}
    <BigAxis x="78" y="226">Y</BigAxis>
    {PARTS.map(([d, f, acc, tr], i) => (
      <g key={i} transform={tr}>
        <path d={d} fill={f} fillRule="evenodd" stroke="#f01414" strokeWidth="1.5" />
        <path d={d} fill="none" stroke={acc} strokeWidth="1" strokeDasharray="5 4" />
      </g>
    ))}
    {MARKS.map(([x, y, c], i) => <rect key={i} x={x - 3.5} y={y - 3.5} width="7" height="7" fill={c} />)}
    {LABELS.map(([t, x, y, r], i) => <PartText key={i} x={x} y={y} transform={r ? `rotate(${r} ${x} ${y})` : undefined}>{t}</PartText>)}
    <g fill="none" stroke="#2adede" strokeWidth="1.1" strokeDasharray="1.2 4" strokeLinecap="round">
      {DOTTED.map((p, i) => <polyline key={i} points={p} />)}
    </g>
    <g fill="none" stroke="#e01414" strokeWidth="1.15">
      {REDS.map(([x, y, d], i) => <polyline key={i} points={chevron(x, y, d)} />)}
    </g>
    <g fill="none" stroke="#1fd8d8" strokeWidth="1.25">
      {CYANS.map((p, i) => <polyline key={i} points={p} />)}
    </g>
    {TORCHES.map(([x, y], i) => <Torch key={i} x={x} y={y} />)}
    <BigAxis x="1498" y="1132">X</BigAxis>
  </Sheet>
);

const Chev = ({ d }) => <svg width="12" height="16" viewBox="0 0 12 16"><path d={d} fill="none" stroke="#555" strokeWidth="2.2" /></svg>;
const ChevV = ({ d }) => <svg width="16" height="12" viewBox="0 0 16 12"><path d={d} fill="none" stroke="#555" strokeWidth="2.2" /></svg>;

export default function App() {
  return (
    <Shell>
      <Global />
      <TitleBar>
        <Ico n="logo" />
        <TitleText>Техтран - Раскрой листового материала (фигурный)</TitleText>
        <WinBtn><svg width="16" height="16"><path d="M0 8h16" stroke="#fff" strokeWidth="1.3" /></svg></WinBtn>
        <WinBtn><svg width="16" height="16"><rect x=".7" y=".7" width="14.6" height="14.6" fill="none" stroke="#fff" strokeWidth="1.3" /></svg></WinBtn>
        <WinBtn><svg width="16" height="16"><path d="M0 0l16 16M16 0L0 16" stroke="#fff" strokeWidth="1.3" /></svg></WinBtn>
      </TitleBar>
      <MenuBar>
        <Grip $w={6} />
        <MenuIconWrap><Ico n="base" /></MenuIconWrap>
        {['Файл', 'Правка', 'Просмотр', 'Ввод', 'Графика', 'Настройка', 'Окно', 'Справка'].map(m => <MenuItem key={m}>{m}</MenuItem>)}
      </MenuBar>
      <ToolRow>
        {ROW1.map((g, i) => <Group key={i}>{g.items.map(renderTool)}</Group>)}
      </ToolRow>
      <SecondRow>
        <PlayGroup>
          <Grip $w={6} />
          <ToolBtn style={{ width: 44 }}><Ico n="play" s={38} /></ToolBtn>
          <Drop $w={16} />
          <SliderBox $w={1440} $pad={14} style={{ marginLeft: 8 }}>
            <Track />
            <Thumb width="20" height="34" viewBox="0 0 20 34" style={{ left: 1407 }}><path d="M0 0h20v24l-10 10L0 24z" fill="#0078d7" /></Thumb>
          </SliderBox>
          <Sep $w={17} />
          <SliderBox $w={215} $pad={14}>
            <Track />
            <Thumb width="20" height="34" viewBox="0 0 20 34" style={{ left: 121 }}><path d="M0 0h20v24l-10 10L0 24z" fill="#0078d7" /></Thumb>
          </SliderBox>
          <Drop $w={24} />
        </PlayGroup>
      </SecondRow>
      <Main>
        <Dock>
          <DockSection $h={573}>
            <DockGrid $top={0}>
              {DOCK1.map((n, i) => <DockCell key={i}><Ico n={n} /></DockCell>)}
            </DockGrid>
          </DockSection>
          <DockSection $h={600} $end>
            <DockGrid $top={1}>
              {DOCK2A.map((n, i) => <DockCell key={i}><Ico n={n} /></DockCell>)}
              <DockInput>5</DockInput>
              {DOCK2B.map((n, i) => <DockCell key={i}><Ico n={n} /></DockCell>)}
              <DockInput>5°</DockInput>
              <DockCell><Ico n="rotL" /></DockCell>
              <DockCell><Ico n="rotR" /></DockCell>
            </DockGrid>
          </DockSection>
        </Dock>
        <Work>
          <TabStrip>
            <Tab $pl={44} $pr={18} $z={3}><TabIcon $mr={18}><Ico n="tabGrid" s={28} /></TabIcon>Детали задания 0183</Tab>
            <Tab $ml={-40} $pl={53} $pr={15} $z={2}><TabIcon $mr={18}><Ico n="tabGrid" s={28} /></TabIcon>Раскрои листов задания 0183</Tab>
            <Tab $ml={-25} $pl={42} $pr={5} $z={5} $active><TabIcon $mr={20}><Ico n="tabGrid" s={28} /></TabIcon>Графика:Задание 0183 раскрой 018<CloseTab>x</CloseTab></Tab>
            <Tab $ml={-40} $pl={52} $pr={32} $z={1}><TabIcon $mr={14}><Ico n="xls" s={30} /></TabIcon>Задание 0183 раскрой 015 *</Tab>
            <TabsMenu />
          </TabStrip>
          <Frame>
            <FrameTop>
              <CanvasBox><Sheet2D /></CanvasBox>
              <VScroll>
                <ScrollEnd $h={38}><ChevV d="M2 10l6-7 6 7" /></ScrollEnd>
                <VThumb />
                <Spring />
                <ScrollEnd $h={30}><ChevV d="M2 2l6 7 6-7" /></ScrollEnd>
              </VScroll>
            </FrameTop>
            <HScroll>
              <ArrowCell $w={44}><Chev d="M9 2L3 8l6 6" /></ArrowCell>
              <HThumb />
              <Spring />
              <ArrowCell $w={30}><Chev d="M3 2l6 6-6 6" /></ArrowCell>
            </HScroll>
          </Frame>
          <BottomPanel>
            <Check><svg width="17" height="17" viewBox="0 0 17 17"><path d="M3 8l4 6 7-12" fill="none" stroke="#333" strokeWidth="1.6" /></svg></Check>
            Все
            <PanelBtn $w={279} $ml={30}>Параметры обработки...</PanelBtn>
            <PanelBtn $w={306} $ml={14}>Параметры эквидистанты...</PanelBtn>
            <PanelLabel>Набор параметров:</PanelLabel>
            <PanelSelect>&lt;без имени&gt;<ChevV d="M2 2l6 7 6-7" /></PanelSelect>
            <EnterBtn>Ввод</EnterBtn>
          </BottomPanel>
        </Work>
      </Main>
      <StatusBar>
        Готово
        <StatusCell $ml={1600}>ПРИВЯЗКА ВЫКЛ</StatusCell>
        <StatusDiv />
        <StatusCell>x:694.457 y:1855.062 z:0.000</StatusCell>
      </StatusBar>
    </Shell>
  );
}
